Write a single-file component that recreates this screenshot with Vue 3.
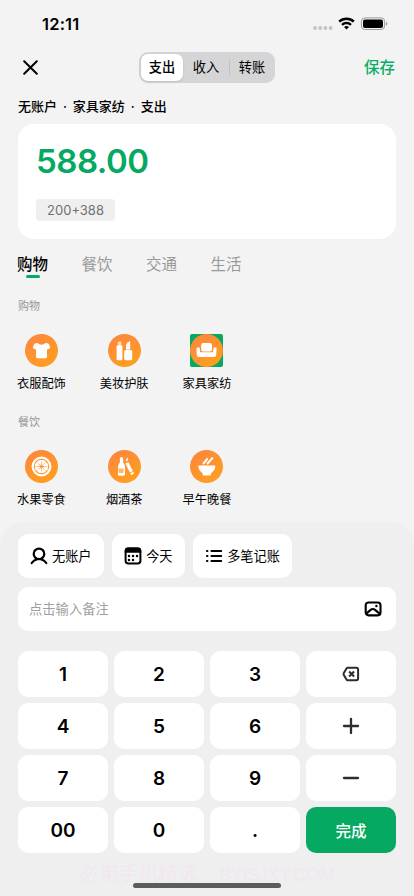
<script setup>
const segments = ['支出', '收入', '转账']
const tabs = ['购物', '餐饮', '交通', '生活']
const groups = [
  {
    title: '购物',
    items: [
      { name: '衣服配饰', icon: 'shirt' },
      { name: '美妆护肤', icon: 'makeup' },
      { name: '家具家纺', icon: 'sofa', selected: true },
    ],
  },
  {
    title: '餐饮',
    items: [
      { name: '水果零食', icon: 'fruit' },
      { name: '烟酒茶', icon: 'bottle' },
      { name: '早午晚餐', icon: 'bowl' },
    ],
  },
]
const keys = ['1', '2', '3', 'del', '4', '5', '6', 'plus', '7', '8', '9', 'minus', '00', '0', '.', 'done']
</script>

<template>
  <div class="screen">
    <header class="status">
      <span class="time">12:11</span>
      <svg class="status-icons" width="76" height="16" viewBox="0 0 76 16">
        <g fill="#c3c3c4">
          <circle cx="3" cy="12" r="1.9" /><circle cx="8.2" cy="12" r="1.9" />
          <circle cx="13.4" cy="12" r="1.9" /><circle cx="18.6" cy="12" r="1.9" />
        </g>
        <g fill="none" stroke="#000" stroke-width="2.4">
          <path d="M27.2 5.6a10.6 10.6 0 0 1 14.6 0" />
          <path d="M30 8.8a6.6 6.6 0 0 1 9 0" />
        </g>
        <path d="M34.5 13.6l-2.5-2.5a3.6 3.6 0 0 1 5 0z" fill="#000" />
        <rect x="49.4" y="1.9" width="23.2" height="11.6" rx="3.4" fill="none" stroke="#9b9b9b" stroke-width="1" />
        <rect x="51" y="3.5" width="20" height="8.4" rx="2" fill="#000" />
        <path d="M74 5.8v3.8q1.4-.6 1.4-1.9T74 5.8z" fill="#9b9b9b" />
      </svg>
    </header>

    <nav class="nav">
      <svg class="close" width="15" height="15" viewBox="0 0 15 15">
        <path d="M1.2 1.2l12.6 12.6M13.8 1.2L1.2 13.8" stroke="#000" stroke-width="2" stroke-linecap="round" />
      </svg>
      <div class="segmented">
        <span v-for="(s, i) in segments" :key="s" class="segment" :class="{ active: i === 0, divided: i === 2 }">{{ s }}</span>
      </div>
      <span class="save">保存</span>
    </nav>

    <div class="crumbs">无账户 · 家具家纺 · 支出</div>

    <section class="amount-card">
      <div class="amount">588.00</div>
      <span class="formula">200+388</span>
    </section>

    <div class="tabs">
      <span v-for="(t, i) in tabs" :key="t" class="tab" :class="{ active: i === 0 }">{{ t }}</span>
    </div>

    <section v-for="g in groups" :key="g.title" class="group">
      <h3 class="group-title">{{ g.title }}</h3>
      <div class="grid">
        <div v-for="item in g.items" :key="item.name" class="item">
          <span class="tile" :class="{ selected: item.selected }">
            <svg class="glyph" width="33" height="33" viewBox="0 0 33 33" fill="#fff">
              <path
                v-if="item.icon === 'shirt'"
                d="M12.6 9q1.2 1.7 3.9 1.7T20.4 9l2.6.6q.8.3 1.1 1l1 3q.2.7-.5 1l-2.6.8v7.4q0 1.4-1.4 1.4h-8.2Q11 24.2 11 22.8V15.4l-2.6-.8q-.7-.3-.5-1l1-3q.3-.7 1.1-1z"
              />
              <g v-else-if="item.icon === 'makeup'">
                <rect x="9.8" y="7.6" width="3.6" height="3.6" rx="1.2" fill="#ffd8b0" />
                <rect x="8.6" y="11.2" width="5.8" height="15" rx="1.3" />
                <path d="M18 15.4v-4.5q.8-2.9 4.2-4v8.5z" />
                <rect x="16.2" y="16" width="8" height="10.2" rx="1.5" />
              </g>
              <g v-else-if="item.icon === 'sofa'">
                <rect x="11.2" y="9" width="10.8" height="8.4" rx="2" />
                <path d="M8 13.3q1.9 0 2 1.9v2q0 1 1 1h11.2q1 0 1-1v-2q.1-1.9 2-1.9t1.4 1.9l-.4 6q-.2 1.7-1.8 1.7H8.6q-1.6 0-1.8-1.7l-.4-6Q6.4 13.3 8 13.3z" />
              </g>
              <g v-else-if="item.icon === 'fruit'">
                <circle cx="16.5" cy="16.5" r="9.9" />
                <circle cx="16.5" cy="16.5" r="7.7" fill="#ff9529" />
                <g v-for="a in [0, 45, 90, 135, 180, 225, 270, 315]" :key="a">
                  <path d="M16.5 15.5L14 10.6Q16.5 8.7 19 10.6z" :transform="`rotate(${a + 22.5} 16.5 16.5)`" />
                </g>
              </g>
              <g v-else-if="item.icon === 'bottle'">
                <path d="M12 7.6q1.5-.8 3 0l.2 4.8q1.8 2.3 1.8 4.6v7.2q0 1.6-1.6 1.6h-3.8q-1.6 0-1.6-1.6V17q0-2.3 1.8-4.6z" />
                <rect x="10.6" y="18.6" width="5" height="4.4" fill="#ffb968" />
                <path d="M17.4 13.6l3-1.4 4.5 8.8-3 1.6z" />
                <path d="M22.3 23.3l3-1.6.7 1.3q-.5 1.7-2.8 1.9z" />
                <path d="M18 11.5q-.6-2.7 1.7-4 .5 1.7-.4 3.5z" />
              </g>
              <g v-else>
                <path d="M9 15.6h15.6q.8 0 .7.9-.3 3.6-4 6.5l-.5 2q-.2.6-1 .6h-6.1q-.7 0-.9-.6l-.5-2q-3.7-2.9-4-6.500-.1-.9.7-.9z" />
                <path d="M13.6 13.4l3.5-4.2M17.6 13.4l4.7-5.2" stroke="#fff" stroke-width="2.1" stroke-linecap="round" />
              </g>
            </svg>
          </span>
          <span class="item-name">{{ item.name }}</span>
        </div>
      </div>
    </section>

    <section class="panel">
      <div class="actions">
        <button class="action">
          <svg width="18" height="18" viewBox="0 0 18 18" fill="none" stroke="#000" stroke-width="2.2" stroke-linecap="round">
            <circle cx="9" cy="6.9" r="5.3" />
            <path d="M1.7 16q2-3.1 5.2-3.7M16.3 16q-2-3.1-5.2-3.7" />
          </svg>
          <span>无账户</span>
        </button>
        <button class="action">
          <svg width="18" height="18" viewBox="0 0 18 18">
            <rect x="1.6" y="1.4" width="14.8" height="15.2" rx="2.8" fill="none" stroke="#000" stroke-width="2" />
            <path d="M.8 5.8V3.5Q.8.5 3.8.5h10.4q3 0 3 3v2.3z" />
            <circle v-for="x in [5, 9, 13]" :key="x" :cx="x" cy="9" r="1.25" />
            <circle v-for="x in [5, 9]" :key="'b' + x" :cx="x" cy="12.9" r="1.25" />
          </svg>
          <span>今天</span>
        </button>
        <button class="action">
          <svg width="18" height="18" viewBox="0 0 18 18" stroke="#000" stroke-width="2.2" stroke-linecap="round">
            <path d="M6.5 4h9.6M6.5 9h9.6M6.5 14h9.6M2 4h.4M2 9h.4M2 14h.4" />
          </svg>
          <span>多笔记账</span>
        </button>
      </div>

      <div class="note">
        <span>点击输入备注</span>
        <svg width="18" height="16" viewBox="0 0 18 16" fill="none" stroke="#000" stroke-width="2.1">
          <rect x="1.7" y="1.5" width="14.8" height="12.9" rx="2.8" />
          <path d="M2 12.9l4.7-4q2.2-1.8 4.4 0l5 4.2" />
          <circle cx="12.4" cy="5" r="1.2" fill="#000" stroke="none" />
        </svg>
      </div>

      <div class="keypad">
        <button v-for="k in keys" :key="k" class="key" :class="{ done: k === 'done' }">
          <svg v-if="k === 'del'" width="18" height="16" viewBox="0 0 18 16" fill="none" stroke="#2d2d2d" stroke-width="2" stroke-linejoin="round">
            <path d="M5.7 1.7h8.7q1.7 0 1.7 1.7v9.2q0 1.7-1.7 1.7H5.7q-.8 0-1.2-.7L1.7 8.7q-.3-.7 0-1.4l2.8-4.9q.4-.7 1.2-.7z" />
            <path d="M7.1 5.5l5 5M12.1 5.5l-5 5" />
          </svg>
          <svg v-else-if="k === 'plus' || k === 'minus'" width="18" height="18" viewBox="0 0 18 18" stroke="#2d2d2d" stroke-width="2.3" stroke-linecap="round">
            <path d="M2 9h14" />
            <path v-if="k === 'plus'" d="M9 2v14" />
          </svg>
          <span v-else>{{ k === 'done' ? '完成' : k }}</span>
        </button>
      </div>

      <footer class="footer">
        <span class="mark">必用手机精选 · <span class="latin">BYISJXY.COM</span></span>
        <i class="home"></i>
      </footer>
    </section>
  </div>
</template>

<style>
body {
  background: #f3f3f3;
}
</style>

<style scoped>
.screen {
  box-sizing: border-box;
  width: 414px;
  height: 896px;
  display: flex;
  flex-direction: column;
  overflow: hidden;
  background: #f3f3f3;
  color: #000;
  font-family: Inter, 'Noto Sans CJK SC', sans-serif;
}
.status {
  height: 48px;
  padding: 0 26px 0 42px;
  display: flex;
  align-items: center;
  justify-content: space-between;
  box-sizing: border-box;
}
.time {
  font-size: 16.5px;
  font-weight: 600;
  letter-spacing: 0.2px;
}
.nav {
  height: 38px;
  padding: 0 19px 0 23px;
  display: grid;
  grid-template-columns: 116px 136px 1fr;
  align-items: center;
}
.segmented {
  height: 31px;
  box-sizing: border-box;
  padding: 2px;
  display: grid;
  grid-template-columns: 42px 46px 1fr;
  border-radius: 9px;
  background: #d5d5d7;
}
.segment {
  display: flex;
  align-items: center;
  justify-content: center;
  font-size: 13.2px;
  line-height: 20px;
}
.segment.active {
  border-radius: 7px;
  background: #fff;
  font-weight: 500;
  box-shadow: 0 1px 3px rgba(0, 0, 0, 0.1);
}
.segment.divided {
  padding-left: 2px;
  background: linear-gradient(#c3c3c5, #c3c3c5) 0 50% / 1px 17px no-repeat;
}
.save {
  justify-self: end;
  padding-bottom: 2px;
  font-size: 15.5px;
  font-weight: 500;
  color: #0bad67;
}
.crumbs {
  height: 37.5px;
  padding-left: 18px;
  font-size: 13px;
  font-weight: 500;
  line-height: 41px;
  word-spacing: 2.5px;
  box-sizing: border-box;
}
.amount-card {
  height: 115.5px;
  box-sizing: border-box;
  margin: 0 18px;
  padding: 17.5px 18px 0;
  border-radius: 16px;
  background: #fff;
}
.amount {
  height: 58px;
  font-size: 33px;
  font-weight: 560;
  line-height: 40px;
  letter-spacing: -0.5px;
  color: #05a961;
}
.formula {
  display: flex;
  align-items: center;
  justify-content: center;
  width: 79px;
  height: 22px;
  border-radius: 4px;
  background: #efefef;
  color: #717171;
  font-size: 13px;
}
.tabs {
  height: 50px;
  padding-left: 17px;
  display: flex;
  gap: 33.5px;
  font-size: 15.5px;
}
.tab {
  display: flex;
  flex-direction: column;
  align-items: center;
  padding-top: 15px;
  line-height: 21px;
  color: #999;
}
.tab.active {
  color: #000;
  font-weight: 500;
}
.tab.active::after {
  content: '';
  width: 14px;
  height: 3px;
  border-radius: 2px;
  background: #05a961;
}
.group {
  height: 116px;
  padding-top: 8.5px;
  box-sizing: border-box;
  flex: none;
}
.group-title {
  margin: 0 0 19px 18px;
  font-size: 11px;
  font-weight: 400;
  line-height: 17px;
  color: #989898;
}
.grid {
  display: grid;
  grid-template-columns: repeat(5, 1fr);
}
.item {
  display: flex;
  flex-direction: column;
  align-items: center;
  gap: 8px;
}
.tile {
  display: flex;
  width: 33px;
  height: 33px;
  border-radius: 2px;
}
.tile.selected {
  background: #05a961;
}
.glyph {
  border-radius: 50%;
  background: linear-gradient(150deg, #fd8440, #ffa21c);
}
.item-name {
  font-size: 12.2px;
  line-height: 18px;
  white-space: nowrap;
}
.panel {
  flex: 1;
  margin-top: 1px;
  padding: 12px 18px 0;
  display: flex;
  flex-direction: column;
  border-radius: 24px 24px 0 0;
  background: #efefef;
}
.actions {
  display: flex;
  gap: 8.6px;
}
button {
  margin: 0;
  padding: 0;
  border: 0;
  background: #fff;
  color: #000;
  font-family: inherit;
}
.action {
  height: 44px;
  padding: 0 12px;
  display: flex;
  align-items: center;
  gap: 4px;
  border-radius: 10px;
  font-size: 13.2px;
}
.action span,
.note span {
  padding-bottom: 2px;
}
.note {
  height: 44px;
  box-sizing: border-box;
  margin: 9px 0 19.5px;
  padding: 0 14px 0 11px;
  display: flex;
  align-items: center;
  justify-content: space-between;
  border-radius: 10px;
  background: #fff;
  color: #a0a0a0;
  font-size: 13.3px;
}
.keypad {
  display: grid;
  grid-template-columns: repeat(4, 1fr);
  grid-auto-rows: 46.5px;
  gap: 5.6px 6px;
}
.key {
  display: flex;
  align-items: center;
  justify-content: center;
  border-radius: 10px;
  font-size: 19px;
  font-weight: 600;
}
.key:not(.done) span {
  padding-top: 1px;
}
.key.done {
  background: #05a961;
  color: #fff;
  font-size: 15.5px;
  font-weight: 500;
}
.key.done span {
  padding-bottom: 1px;
}
.footer {
  flex: 1;
  display: flex;
  flex-direction: column;
  align-items: center;
  padding-top: 9px;
}
.mark {
  height: 21px;
  font-size: 19.7px;
  line-height: 24px;
  color: #f3e6f2;
  white-space: nowrap;
  word-spacing: 2.5px;
}
.latin {
  font-family: 'Liberation Sans', sans-serif;
  font-size: 17.5px;
}
.home {
  width: 148px;
  height: 5px;
  border-radius: 3px;
  background: #5c5c5c;
}
</style>
